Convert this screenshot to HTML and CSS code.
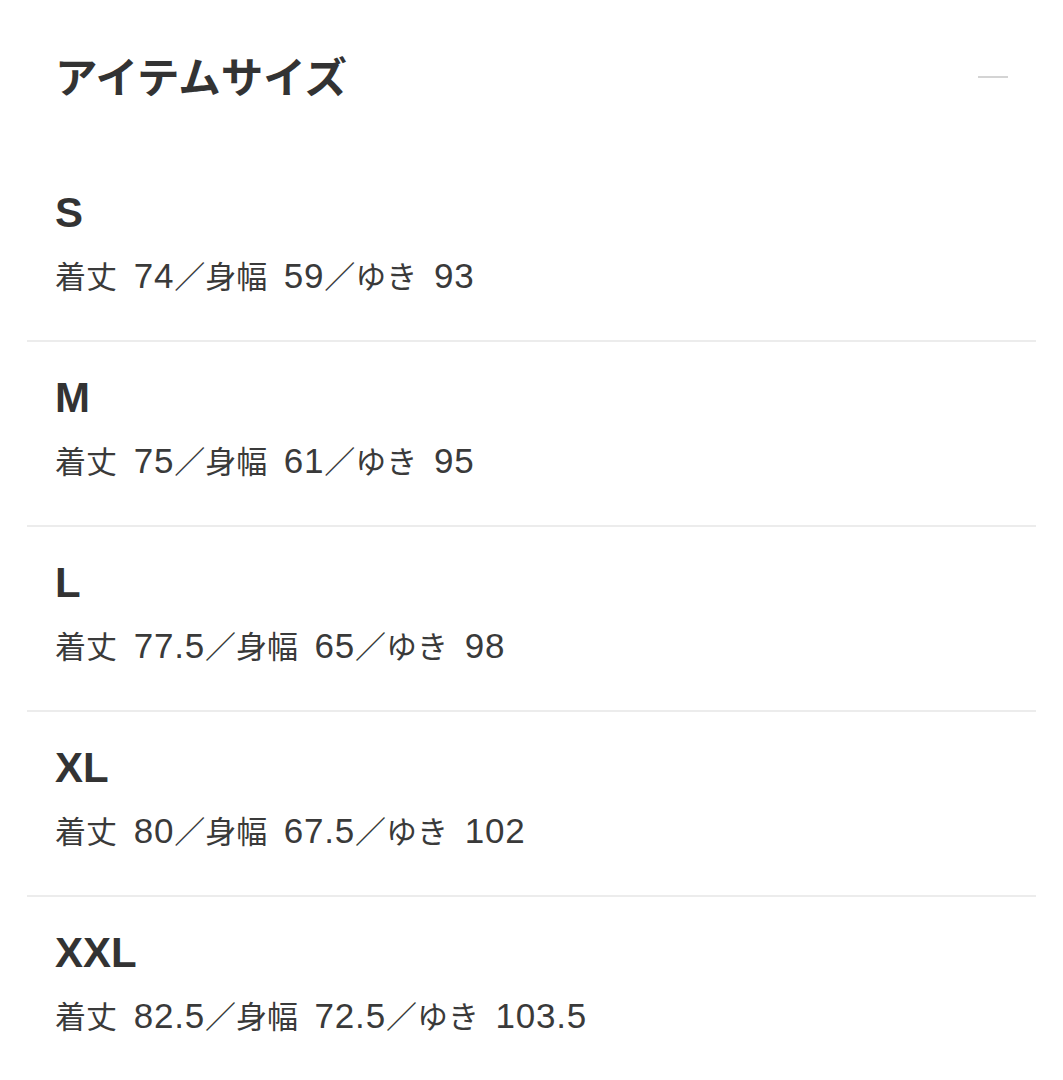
FILE: index.html
```html
<!DOCTYPE html>
<html lang="ja">
    <head>
        <meta charset="utf-8">
        <title>アイテムサイズ</title>
        <link rel="stylesheet" href="styles.css">
    </head>
    <body>
        <section class="size-panel">
            <div class="panel-header">
                <h2 class="panel-title">アイテムサイズ</h2>
                <span class="collapse-icon"></span>
            </div>
            <ul class="size-list">
                <li class="size-row">
                    <div class="size-name">S</div>
                    <div class="size-detail">着丈 <span class="num">74</span>／身幅 <span class="num">59</span>／ゆき <span class="num">93</span></div>
                </li>
                <li class="size-row">
                    <div class="size-name">M</div>
                    <div class="size-detail">着丈 <span class="num">75</span>／身幅 <span class="num">61</span>／ゆき <span class="num">95</span></div>
                </li>
                <li class="size-row">
                    <div class="size-name">L</div>
                    <div class="size-detail">着丈 <span class="num">77.5</span>／身幅 <span class="num">65</span>／ゆき <span class="num">98</span></div>
                </li>
                <li class="size-row">
                    <div class="size-name">XL</div>
                    <div class="size-detail">着丈 <span class="num">80</span>／身幅 <span class="num">67.5</span>／ゆき <span class="num">102</span></div>
                </li>
                <li class="size-row">
                    <div class="size-name">XXL</div>
                    <div class="size-detail">着丈 <span class="num">82.5</span>／身幅 <span class="num">72.5</span>／ゆき <span class="num">103.5</span></div>
                </li>
            </ul>
        </section>
    </body>
</html>
```
FILE: styles.css
```css
body {
    margin: 0; /* no default margin */
    background: #fff;
    color: #333;
    font-family: "Liberation Sans", "Noto Sans CJK JP", sans-serif;
}

.size-panel {
    padding: 0 27px;
}

.panel-header {
    display: flex;
    justify-content: space-between;
    align-items: center;
    padding: 47px 28px 54px 28px;
}

.panel-title {
    margin: 0;
    font-family: "Noto Sans CJK JP", sans-serif;
    font-size: 42.5px;
    font-weight: 700;
    line-height: 56px;
    color: #333;
}

.collapse-icon {
    display: block;
    width: 30px;
    height: 2px;
    margin-top: 3px;
    background: #d4d4d4;
}

.size-list {
    list-style: none;
    margin: 0;
    padding: 0;
}

.size-row {
    padding: 30px 28px 40px 28px;
    border-bottom: 2px solid #ececec;
}

.size-row:last-child {
    border-bottom: none;
}

.size-name {
    font-size: 42px;
    font-weight: 700;
    line-height: 52px;
    color: #333;
}

.size-detail {
    margin-top: 17px;
    font-size: 31px;
    line-height: 44px;
    word-spacing: 8px;
    color: #3a3a3a;
}

/* latin digits run larger than the kana around them */
.num {
    font-size: 35px;
    line-height: 1;
    letter-spacing: 0.8px;
}
```
